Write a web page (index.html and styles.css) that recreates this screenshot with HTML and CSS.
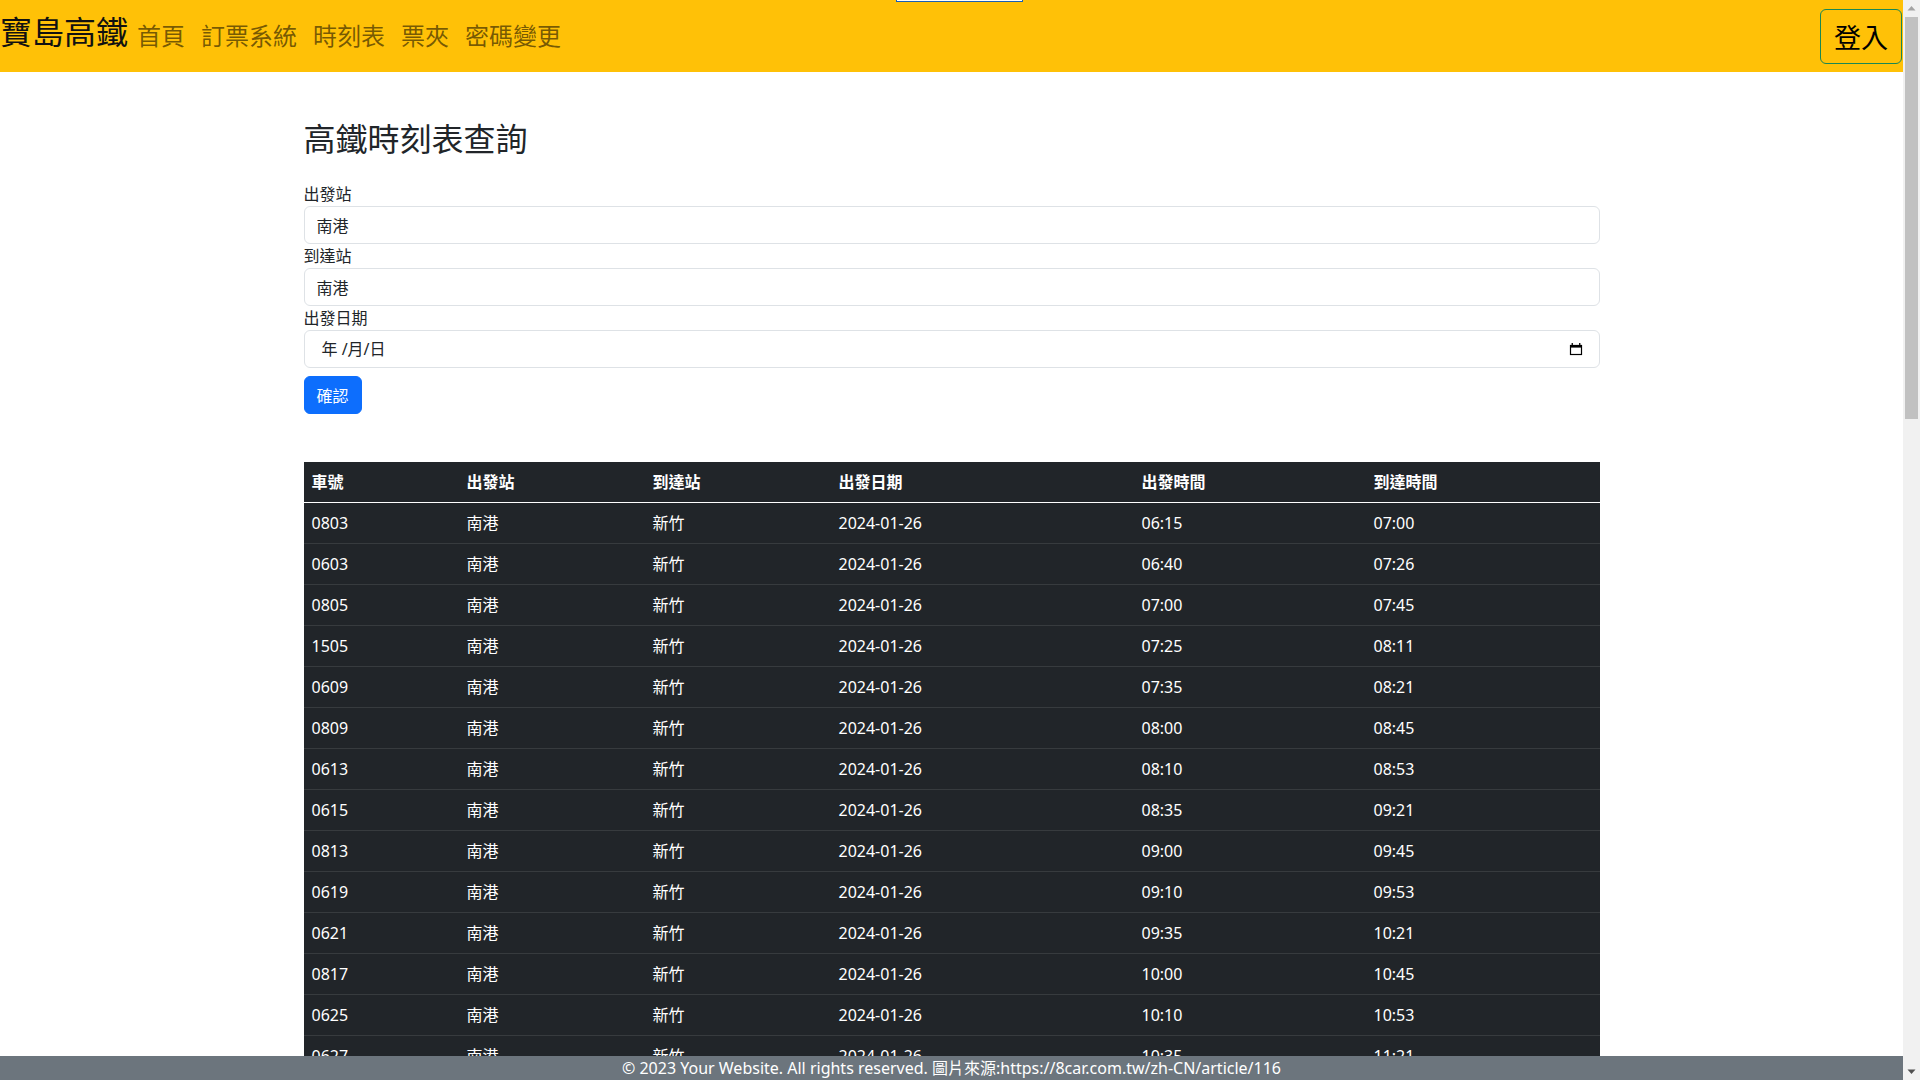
FILE: index.html
```html
<!DOCTYPE html>
<html lang="zh-Hant">
<head>
<meta charset="utf-8">
<title>寶島高鐵 - 時刻表</title>
<link rel="stylesheet" href="styles.css">
</head>
<body>
<div class="page">
<div class="edge-popup"></div>
<nav class="navbar">
  <a class="brand" href="#">寶島高鐵</a>
  <ul class="nav-links">
    <li><a href="#">首頁</a></li>
    <li><a href="#">訂票系統</a></li>
    <li><a href="#">時刻表</a></li>
    <li><a href="#">票夾</a></li>
    <li><a href="#">密碼變更</a></li>
  </ul>
  <button class="login-btn" type="button">登入</button>
</nav>

<main class="container">
  <h2 class="page-title">高鐵時刻表查詢</h2>
  <form class="search-form">
    <label class="form-label" for="from">出發站</label>
    <input class="form-control" id="from" type="text" value="南港">
    <label class="form-label" for="to">到達站</label>
    <input class="form-control" id="to" type="text" value="南港">
    <label class="form-label">出發日期</label>
    <div class="form-control date-control">
      <span class="date-text">年 /月/日</span>
      <svg class="cal-icon" width="14" height="14" viewBox="0 0 14 14" aria-hidden="true">
        <rect x="1.5" y="3.5" width="11" height="9" fill="none" stroke="#000" stroke-width="1.2"/>
        <rect x="1" y="3" width="12" height="2.6" fill="#000"/>
        <rect x="2.6" y="1" width="1.3" height="2.5" fill="#000"/>
        <rect x="10.1" y="1" width="1.3" height="2.5" fill="#000"/>
      </svg>
    </div>
    <button class="btn-primary" type="button">確認</button>
  </form>

  <table class="schedule">
    <colgroup>
      <col class="c-no"><col class="c-from"><col class="c-to"><col class="c-date"><col class="c-dep"><col class="c-arr">
    </colgroup>
    <thead>
      <tr><th>車號</th><th>出發站</th><th>到達站</th><th>出發日期</th><th>出發時間</th><th>到達時間</th></tr>
    </thead>
    <tbody>
      <tr><td>0803</td><td>南港</td><td>新竹</td><td>2024-01-26</td><td>06:15</td><td>07:00</td></tr>
      <tr><td>0603</td><td>南港</td><td>新竹</td><td>2024-01-26</td><td>06:40</td><td>07:26</td></tr>
      <tr><td>0805</td><td>南港</td><td>新竹</td><td>2024-01-26</td><td>07:00</td><td>07:45</td></tr>
      <tr><td>1505</td><td>南港</td><td>新竹</td><td>2024-01-26</td><td>07:25</td><td>08:11</td></tr>
      <tr><td>0609</td><td>南港</td><td>新竹</td><td>2024-01-26</td><td>07:35</td><td>08:21</td></tr>
      <tr><td>0809</td><td>南港</td><td>新竹</td><td>2024-01-26</td><td>08:00</td><td>08:45</td></tr>
      <tr><td>0613</td><td>南港</td><td>新竹</td><td>2024-01-26</td><td>08:10</td><td>08:53</td></tr>
      <tr><td>0615</td><td>南港</td><td>新竹</td><td>2024-01-26</td><td>08:35</td><td>09:21</td></tr>
      <tr><td>0813</td><td>南港</td><td>新竹</td><td>2024-01-26</td><td>09:00</td><td>09:45</td></tr>
      <tr><td>0619</td><td>南港</td><td>新竹</td><td>2024-01-26</td><td>09:10</td><td>09:53</td></tr>
      <tr><td>0621</td><td>南港</td><td>新竹</td><td>2024-01-26</td><td>09:35</td><td>10:21</td></tr>
      <tr><td>0817</td><td>南港</td><td>新竹</td><td>2024-01-26</td><td>10:00</td><td>10:45</td></tr>
      <tr><td>0625</td><td>南港</td><td>新竹</td><td>2024-01-26</td><td>10:10</td><td>10:53</td></tr>
      <tr><td>0627</td><td>南港</td><td>新竹</td><td>2024-01-26</td><td>10:35</td><td>11:21</td></tr>
      <tr><td>0821</td><td>南港</td><td>新竹</td><td>2024-01-26</td><td>11:00</td><td>11:45</td></tr>
      <tr><td>0631</td><td>南港</td><td>新竹</td><td>2024-01-26</td><td>11:10</td><td>11:53</td></tr>
      <tr><td>0633</td><td>南港</td><td>新竹</td><td>2024-01-26</td><td>11:35</td><td>12:21</td></tr>
      <tr><td>0825</td><td>南港</td><td>新竹</td><td>2024-01-26</td><td>12:00</td><td>12:45</td></tr>
      <tr><td>0637</td><td>南港</td><td>新竹</td><td>2024-01-26</td><td>12:10</td><td>12:53</td></tr>
      <tr><td>0639</td><td>南港</td><td>新竹</td><td>2024-01-26</td><td>12:35</td><td>13:21</td></tr>
      <tr><td>0829</td><td>南港</td><td>新竹</td><td>2024-01-26</td><td>13:00</td><td>13:45</td></tr>
      <tr><td>0643</td><td>南港</td><td>新竹</td><td>2024-01-26</td><td>13:10</td><td>13:53</td></tr>
      <tr><td>0645</td><td>南港</td><td>新竹</td><td>2024-01-26</td><td>13:35</td><td>14:21</td></tr>
      <tr><td>0833</td><td>南港</td><td>新竹</td><td>2024-01-26</td><td>14:00</td><td>14:45</td></tr>
      <tr><td>0649</td><td>南港</td><td>新竹</td><td>2024-01-26</td><td>14:10</td><td>14:53</td></tr>
      <tr><td>0651</td><td>南港</td><td>新竹</td><td>2024-01-26</td><td>14:35</td><td>15:21</td></tr>
      <tr><td>0837</td><td>南港</td><td>新竹</td><td>2024-01-26</td><td>15:00</td><td>15:45</td></tr>
      <tr><td>0655</td><td>南港</td><td>新竹</td><td>2024-01-26</td><td>15:10</td><td>15:53</td></tr>
      <tr><td>0657</td><td>南港</td><td>新竹</td><td>2024-01-26</td><td>15:35</td><td>16:21</td></tr>
      <tr><td>0841</td><td>南港</td><td>新竹</td><td>2024-01-26</td><td>16:00</td><td>16:45</td></tr>
      <tr><td>0661</td><td>南港</td><td>新竹</td><td>2024-01-26</td><td>16:10</td><td>16:53</td></tr>
      <tr><td>0663</td><td>南港</td><td>新竹</td><td>2024-01-26</td><td>16:35</td><td>17:21</td></tr>
      <tr><td>0845</td><td>南港</td><td>新竹</td><td>2024-01-26</td><td>17:00</td><td>17:45</td></tr>
      <tr><td>0667</td><td>南港</td><td>新竹</td><td>2024-01-26</td><td>17:10</td><td>17:53</td></tr>
      <tr><td>0669</td><td>南港</td><td>新竹</td><td>2024-01-26</td><td>17:35</td><td>18:21</td></tr>
      <tr><td>0849</td><td>南港</td><td>新竹</td><td>2024-01-26</td><td>18:00</td><td>18:45</td></tr>
      <tr><td>0673</td><td>南港</td><td>新竹</td><td>2024-01-26</td><td>18:10</td><td>18:53</td></tr>
      <tr><td>0675</td><td>南港</td><td>新竹</td><td>2024-01-26</td><td>18:35</td><td>19:21</td></tr>
      <tr><td>0853</td><td>南港</td><td>新竹</td><td>2024-01-26</td><td>19:00</td><td>19:45</td></tr>
      <tr><td>0679</td><td>南港</td><td>新竹</td><td>2024-01-26</td><td>19:10</td><td>19:53</td></tr>
      <tr><td>0681</td><td>南港</td><td>新竹</td><td>2024-01-26</td><td>19:35</td><td>20:21</td></tr>
      <tr><td>0857</td><td>南港</td><td>新竹</td><td>2024-01-26</td><td>20:00</td><td>20:45</td></tr>
      <tr><td>0685</td><td>南港</td><td>新竹</td><td>2024-01-26</td><td>20:10</td><td>20:53</td></tr>
      <tr><td>0687</td><td>南港</td><td>新竹</td><td>2024-01-26</td><td>20:35</td><td>21:21</td></tr>
      <tr><td>0861</td><td>南港</td><td>新竹</td><td>2024-01-26</td><td>21:00</td><td>21:45</td></tr>
      <tr><td>0691</td><td>南港</td><td>新竹</td><td>2024-01-26</td><td>21:10</td><td>21:53</td></tr>
      <tr><td>0693</td><td>南港</td><td>新竹</td><td>2024-01-26</td><td>21:35</td><td>22:21</td></tr>
      <tr><td>0865</td><td>南港</td><td>新竹</td><td>2024-01-26</td><td>22:00</td><td>22:45</td></tr>
      <tr><td>0697</td><td>南港</td><td>新竹</td><td>2024-01-26</td><td>22:10</td><td>22:53</td></tr>
      <tr><td>0699</td><td>南港</td><td>新竹</td><td>2024-01-26</td><td>22:35</td><td>23:21</td></tr>
      <tr><td>0869</td><td>南港</td><td>新竹</td><td>2024-01-26</td><td>22:50</td><td>23:35</td></tr>
      <tr><td>0671</td><td>南港</td><td>新竹</td><td>2024-01-26</td><td>23:05</td><td>23:49</td></tr>
      <tr><td>0873</td><td>南港</td><td>新竹</td><td>2024-01-26</td><td>23:20</td><td>00:05</td></tr>
    </tbody>
  </table>
</main>
<footer class="site-footer">© 2023 Your Website. All rights reserved. 圖片來源:https://8car.com.tw/zh-CN/article/116</footer>
</div>

<div class="scrollbar" aria-hidden="true">
  <div class="sb-btn">
    <svg width="17" height="17" viewBox="0 0 17 17"><polygon points="4.5,10.5 12.5,10.5 8.5,6" fill="#a3a3a3"/></svg>
  </div>
  <div class="sb-track"><div class="sb-thumb"></div></div>
  <div class="sb-btn">
    <svg width="17" height="17" viewBox="0 0 17 17"><polygon points="4.5,6.5 12.5,6.5 8.5,11" fill="#505050"/></svg>
  </div>
</div>
</body>
</html>
```

FILE: styles.css
```css
body {
  margin: 0;
  height: 100vh;
  overflow: hidden;
  display: flex;
  font-family: "Noto Sans", "Noto Sans CJK TC", sans-serif;
  font-size: 16px;
  line-height: 1.5;
  color: #212529;
  background: #fff;
}

.page {
  position: relative;
  flex: 1;
  min-width: 0;
  height: 100vh;
  overflow: hidden;
}

/* window scrollbar */
.scrollbar {
  width: 17px;
  height: 100vh;
  display: flex;
  flex-direction: column;
  background: #f1f1f1;
}
.sb-btn {
  height: 17px;
  flex: none;
}
.sb-btn svg {
  display: block;
}
.sb-track {
  flex: 1;
  padding: 0 2px;
}
.sb-thumb {
  height: 402px;
  background: #c1c1c1;
}

.edge-popup {
  position: absolute;
  top: 0;
  left: 896px;
  width: 125px;
  height: 1px;
  background: #fff;
  border: 1px solid #1a5fb4;
  border-top: none;
}

/* navbar */
.navbar {
  display: flex;
  align-items: center;
  height: 72px;
  background: #ffc107;
}
.brand {
  font-family: "Noto Sans CJK TC", sans-serif;
  font-size: 32px;
  line-height: 48px;
  padding-bottom: 12px;
  color: #111;
  text-decoration: none;
}
.nav-links {
  display: flex;
  list-style: none;
  margin: 0;
  padding: 0 0 3px 0;
}
.nav-links a {
  display: block;
  font-family: "Noto Sans CJK TC", sans-serif;
  font-size: 24px;
  line-height: 36px;
  padding: 0 7px 0 9px;
  color: rgba(0, 0, 0, 0.55);
  text-decoration: none;
}
.login-btn {
  margin-left: auto;
  margin-right: 1px;
  height: 55px;
  padding: 0 13px;
  font-family: "Noto Sans CJK TC", sans-serif;
  font-size: 27px;
  line-height: 51px;
  color: #000;
  background: transparent;
  border: 1px solid #198754;
  border-radius: 6px;
}

/* main */
.container {
  max-width: 1296px;
  margin: 0 auto;
  padding: 46px 12px 100px;
}
.page-title {
  margin: 0 0 26px;
  font-family: "Noto Sans CJK TC", sans-serif;
  font-size: 32px;
  font-weight: 400;
  line-height: 1.2;
}
.search-form {
  display: flex;
  flex-direction: column;
  align-items: flex-start;
  margin-bottom: 48px;
}
.form-label {
  display: block;
}
.form-control {
  box-sizing: border-box;
  width: 100%;
  height: 38px;
  padding: 6px 12px;
  font-family: inherit;
  font-size: 16px;
  line-height: 24px;
  color: #212529;
  background: #fff;
  border: 1px solid #dee2e6;
  border-radius: 6px;
  margin: 0;
}
.date-control {
  display: flex;
  align-items: center;
  justify-content: space-between;
  padding-right: 16px;
}
.date-text {
  padding-left: 5px;
}
.cal-icon {
  display: block;
}
.btn-primary {
  margin-top: 8px;
  height: 38px;
  padding: 0 12px;
  font-family: inherit;
  font-size: 16px;
  color: #fff;
  background: #0d6efd;
  border: 1px solid #0d6efd;
  border-radius: 6px;
}

/* table */
.schedule {
  width: 100%;
  table-layout: fixed;
  border-collapse: collapse;
  background: #212529;
  color: #fff;
}
.c-no { width: 155px; }
.c-from { width: 186px; }
.c-to { width: 186px; }
.c-date { width: 303px; }
.c-dep { width: 232px; }
.c-arr { width: 234px; }
.schedule th,
.schedule td {
  padding: 8px;
  text-align: left;
  line-height: 24px;
}
.schedule th {
  font-weight: 700;
  border-bottom: 1px solid #fff;
}
.schedule td {
  border-bottom: 1px solid #373b3e;
}

.site-footer {
  position: absolute;
  left: 0;
  right: 0;
  top: 1056px;
  height: 24px;
  line-height: 24px;
  text-align: center;
  color: #fff;
  background: #6c757d;
}
```
